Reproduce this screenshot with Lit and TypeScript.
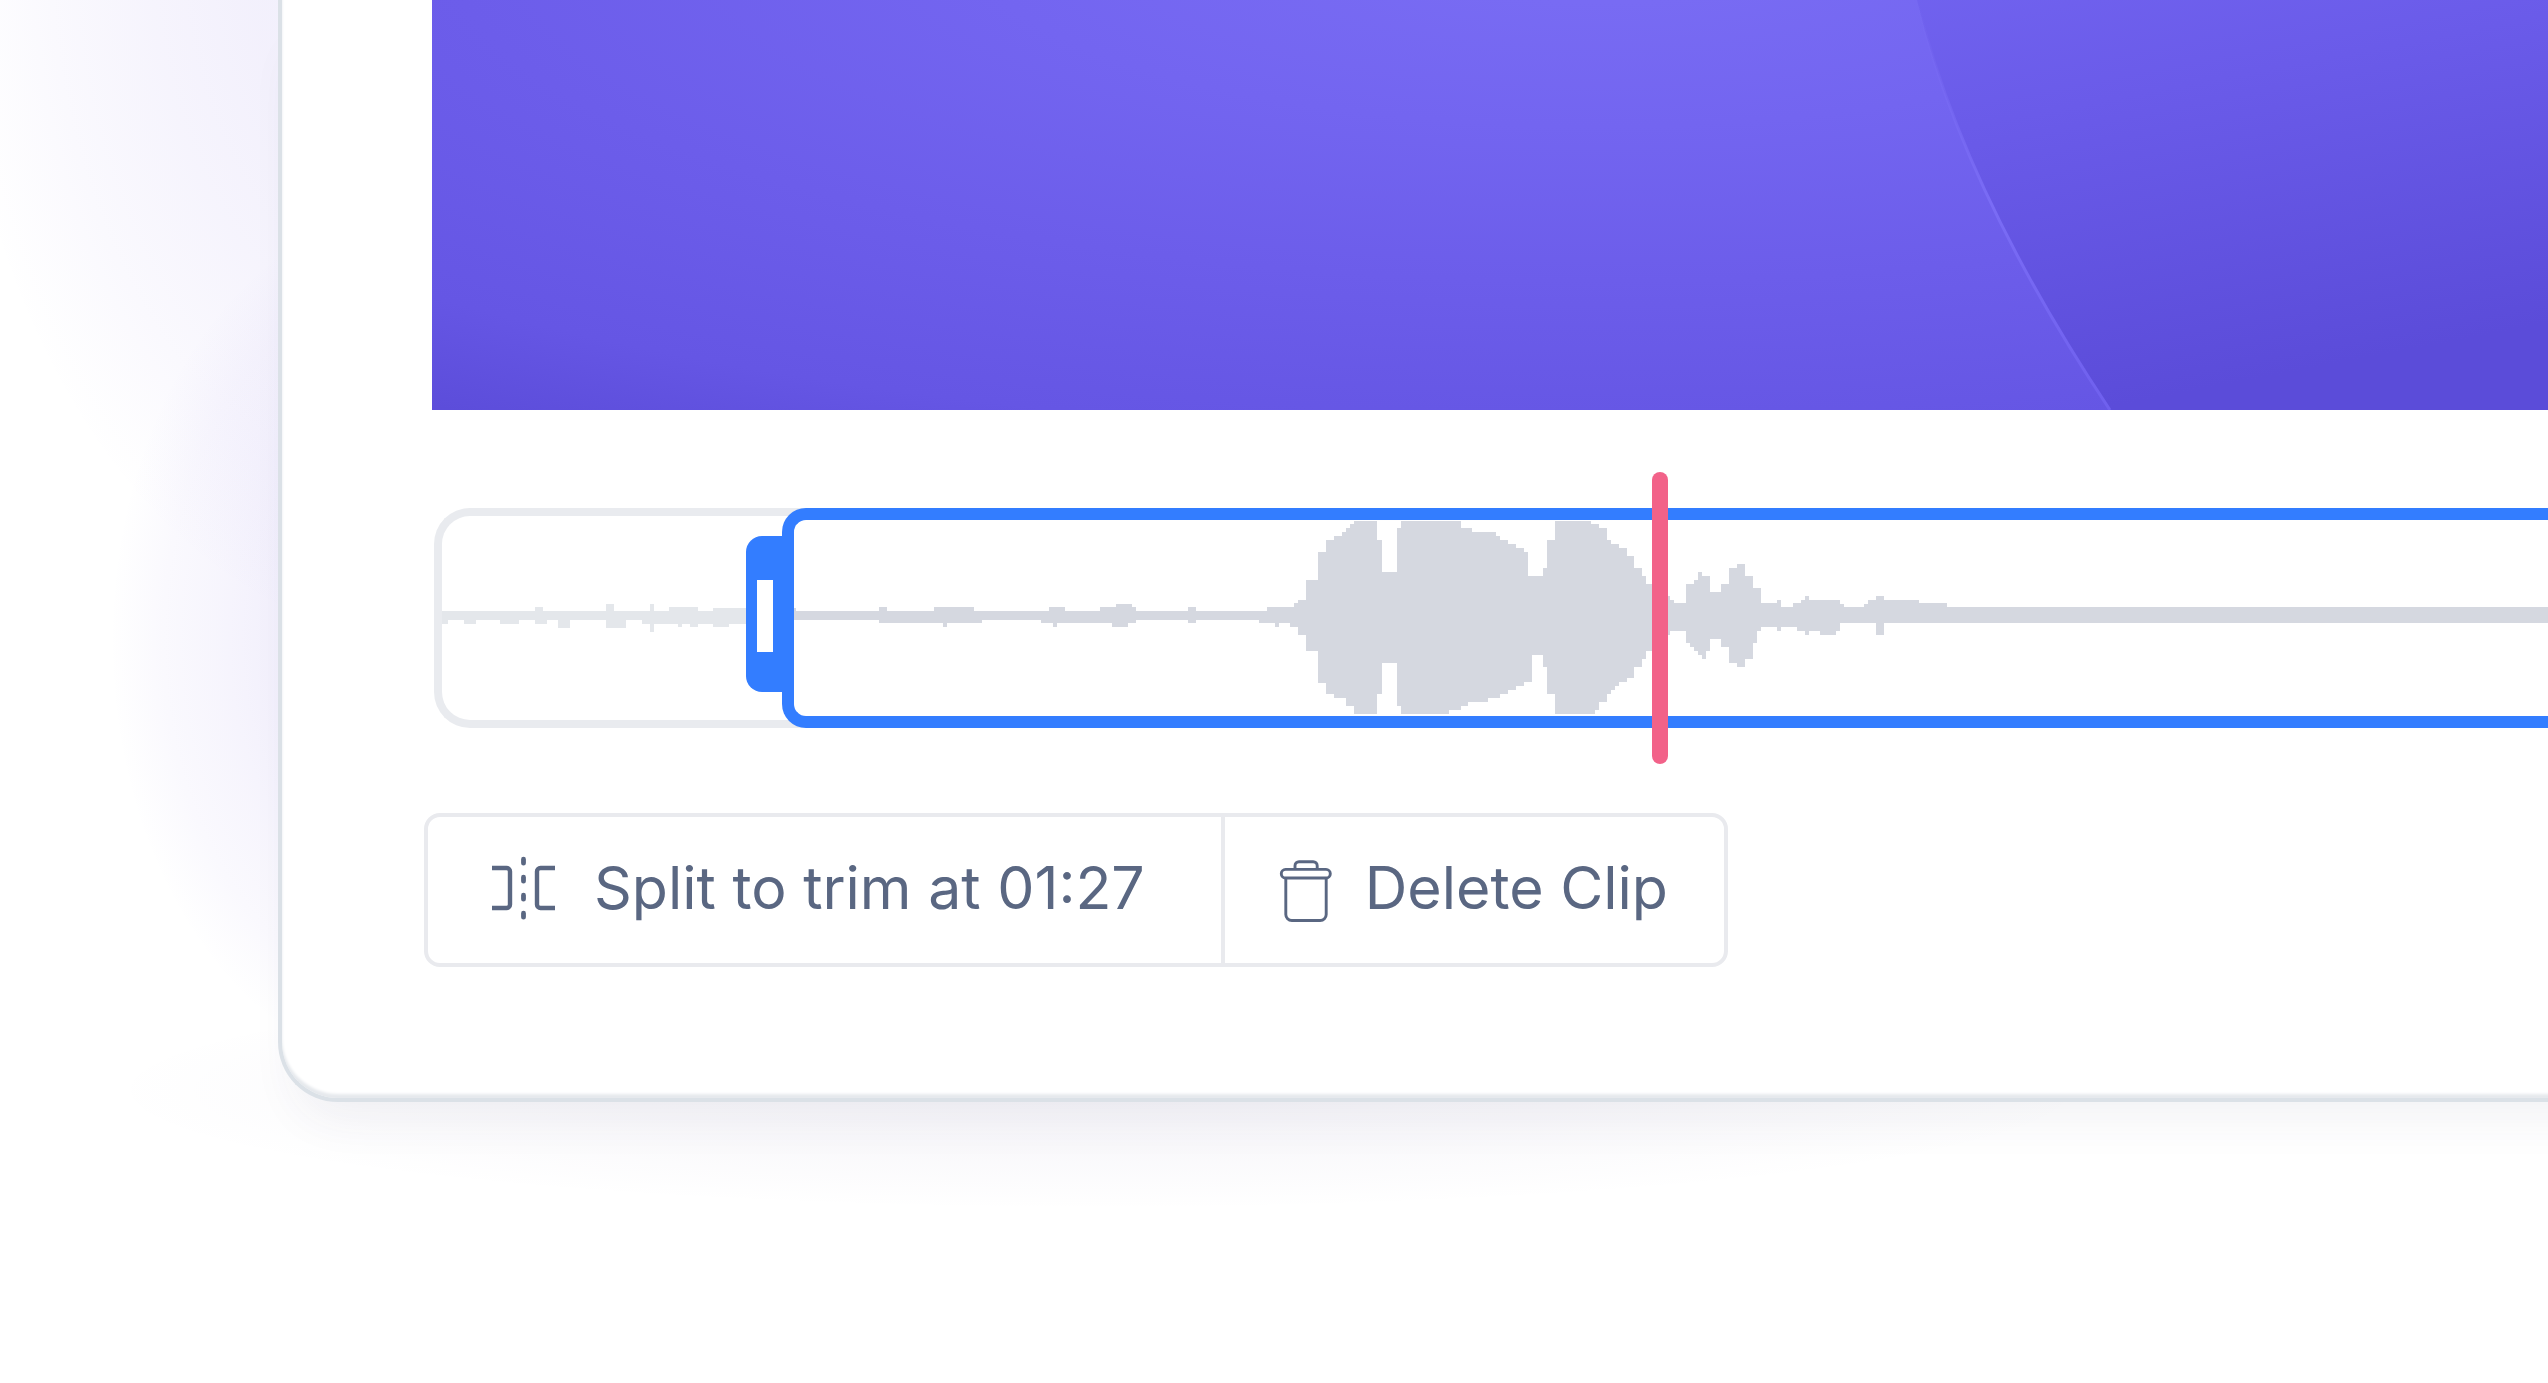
import { LitElement, html, svg, css } from "lit";
import { customElement, property } from "lit/decorators.js";

/** One step of the waveform: left edge, top and bottom, in canvas units. */
type Step = [x: number, top: number, bottom: number];

const IDLE_STEPS: Step[] = [
  [442, 611, 624], [448, 611, 620], [464, 611, 624], [476, 611, 620], [500, 611, 624],
  [519, 611, 620], [535, 607, 624], [543, 611, 624], [547, 611, 620], [558, 611, 628],
  [570, 611, 620], [606, 604, 628], [614, 611, 628], [626, 611, 620], [642, 611, 624],
  [650, 604, 632], [654, 611, 624], [669, 607, 624], [678, 607, 627], [682, 607, 624],
  [690, 607, 627], [698, 611, 624], [713, 608, 627], [729, 608, 624], [760, 608, 624],
];

const CLIP_STEPS: Step[] = [
  [794, 608, 620], [796, 611, 620], [879, 607, 623], [887, 611, 623], [934, 607, 623],
  [943, 607, 627], [947, 607, 623], [974, 611, 623], [982, 611, 620], [1041, 611, 623],
  [1049, 607, 623], [1053, 607, 627], [1057, 607, 623], [1065, 611, 623], [1100, 607, 623],
  [1112, 607, 627], [1116, 604, 627], [1128, 604, 623], [1132, 607, 623], [1136, 611, 620],
  [1188, 607, 623], [1196, 611, 620], [1259, 611, 623], [1267, 607, 623], [1275, 607, 627],
  [1279, 607, 623], [1290, 607, 627], [1294, 603, 627], [1298, 600, 635], [1306, 580, 651],
  [1318, 552, 683], [1326, 540, 694], [1334, 536, 698], [1342, 532, 698], [1346, 528, 706],
  [1350, 524, 706], [1354, 521, 714], [1377, 540, 694], [1382, 572, 663], [1397, 528, 706],
  [1401, 521, 714], [1449, 521, 710], [1461, 528, 706], [1468, 528, 702], [1472, 532, 702],
  [1488, 532, 698], [1496, 536, 698], [1500, 540, 694], [1508, 544, 690], [1516, 548, 686],
  [1524, 552, 682], [1528, 576, 682], [1532, 576, 655], [1543, 568, 667], [1547, 540, 694],
  [1555, 521, 714], [1591, 524, 714], [1595, 524, 710], [1599, 528, 702], [1607, 540, 694],
  [1611, 544, 690], [1615, 544, 686], [1619, 548, 682], [1627, 556, 678], [1634, 568, 667],
  [1642, 576, 659], [1646, 584, 651], [1668, 596, 635], [1670, 600, 631], [1674, 603, 631],
  [1686, 584, 643], [1690, 584, 647], [1694, 580, 651], [1698, 572, 655], [1702, 576, 659],
  [1706, 576, 651], [1710, 592, 639], [1721, 584, 647], [1729, 568, 663], [1737, 564, 667],
  [1745, 576, 659], [1753, 588, 643], [1757, 588, 631], [1761, 603, 627], [1777, 600, 631],
  [1781, 607, 627], [1793, 603, 627], [1797, 603, 631], [1801, 600, 631], [1805, 596, 635],
  [1809, 600, 631], [1820, 600, 635], [1836, 600, 631], [1840, 604, 623], [1844, 607, 623],
  [1864, 604, 623], [1868, 600, 623], [1876, 596, 635], [1884, 600, 623], [1919, 603, 623],
  [1947, 607, 623], [6000, 607, 623],
];

@customElement("wave-form")
export class WaveForm extends LitElement {
  @property({ attribute: false }) steps: Step[] = [];
  @property({ type: Number }) top = 0;

  static styles = css`
    :host { display: block; overflow: hidden; }
    .wave { display: block; width: 100%; height: 100%; fill: currentColor; }
  `;

  render() {
    if (!this.steps.length) return html``;
    const x0 = this.steps[0][0];
    let upper = "";
    let lower = "";
    this.steps.forEach(([x, top, bottom], i) => {
      const px = x - x0;
      upper += i ? `H${px}V${top - this.top}` : `M${px} ${top - this.top}`;
      const next = this.steps[i + 1];
      const right = next ? next[0] - x0 : px;
      lower = `L${right} ${bottom - this.top}H${px}` + lower;
    });
    return html`<svg class="wave" shape-rendering="crispEdges" aria-hidden="true">
      ${svg`<path d=${upper + lower + "Z"} />`}
    </svg>`;
  }
}

@customElement("app-root")
export class AppRoot extends LitElement {
  static styles = css`
    :host {
      display: block;
      min-height: 100vh;
      box-sizing: border-box;
      padding-left: 278px;
      overflow: hidden;
      font-family: Inter, "Liberation Sans", sans-serif;
      color: #5a6782;
      background:
        radial-gradient(ellipse 480px 710px at 430px -60px,
          rgba(100, 70, 220, 0.085) 0%, rgba(100, 70, 220, 0.08) 38%,
          rgba(100, 70, 220, 0.06) 58%, rgba(100, 70, 220, 0.03) 80%,
          rgba(100, 70, 220, 0) 100%),
        radial-gradient(ellipse 320px 440px at 430px 640px,
          rgba(100, 70, 220, 0.1) 0%, rgba(100, 70, 220, 0.08) 50%,
          rgba(100, 70, 220, 0.05) 68%, rgba(100, 70, 220, 0.03) 84%,
          rgba(100, 70, 220, 0) 100%),
        radial-gradient(ellipse 1000px 120px at 1100px 1090px,
          rgba(70, 50, 130, 0.05) 0%, rgba(70, 50, 130, 0.03) 50%,
          rgba(70, 50, 130, 0) 100%),
        #fff;
    }
    .card {
      margin-right: -100px;
      padding: 0 100px 131px 142px;
      border: solid #dbe1e7;
      border-width: 0 0 4px 4px;
      border-bottom-left-radius: 60px;
      background: #fff;
      box-shadow: inset 0 -4px 3px #e6e9ed, 0 34px 50px -20px rgba(60, 60, 100, 0.07);
    }
    .preview { display: block; margin-left: 8px; }
    .picture { display: block; width: 100%; height: auto; }

    .timeline {
      position: relative;
      display: flex;
      height: 220px;
      margin: 98px 0 85px 10px;
    }
    .idle {
      box-sizing: border-box;
      flex: none;
      width: 372px;
      border: 8px solid #e9ebef;
      border-right: 0;
      border-radius: 36px 0 0 36px;
      color: #e4e7eb;
    }
    .clip {
      position: relative;
      box-sizing: border-box;
      flex: 1;
      min-width: 0;
      margin-left: -24px;
      border: 12px solid #337dff;
      border-right: 0;
      border-radius: 24px 0 0 24px;
      background: #fff;
      color: #d5d8e0;
    }
    .idle wave-form, .clip wave-form { width: 100%; height: 100%; }
    .handle {
      position: absolute;
      left: 312px;
      top: 28px;
      display: grid;
      place-items: center start;
      box-sizing: border-box;
      width: 40px;
      height: 156px;
      padding: 4px 0 0 11px;
      border: 0;
      border-radius: 16px 0 0 16px;
      background: #337dff;
      cursor: ew-resize;
    }
    .grip { width: 16px; height: 72px; background: #fff; }
    .playhead {
      position: absolute;
      left: 1218px;
      top: -36px;
      bottom: -36px;
      width: 16px;
      border-radius: 8px;
      background: #f26289;
    }

    .actions {
      display: inline-flex;
      vertical-align: top;
      border: 4px solid #e9eaee;
      border-radius: 16px;
    }
    .action {
      display: flex;
      align-items: center;
      height: 146px;
      padding: 0 56px 0 52px;
      border: 0;
      background: none;
      color: inherit;
      font: 400 59px/72px Inter, "Liberation Sans", sans-serif;
      white-space: nowrap;
      cursor: pointer;
    }
    .action + .action { border-left: 4px solid #e9eaee; }
    .action.split { padding: 0 76px 0 62px; }
    .label { padding-bottom: 4px; }
    .icon {
      display: block;
      flex: none;
      width: 68px;
      height: 68px;
      margin-right: 36px;
      fill: none;
      stroke: currentColor;
    }
    .delete .icon { width: 56px; margin-right: 32px; }
  `;

  private picture() {
    return html`<svg class="picture" viewBox="0 0 2116 410" aria-hidden="true">
      <defs>
        <radialGradient id="glow" gradientUnits="userSpaceOnUse" cx="0" cy="0" r="1"
          gradientTransform="translate(1168 -60) scale(2100 620)">
          <stop offset="0.1" stop-color="#786bf3" />
          <stop offset="0.3" stop-color="#7365f0" />
          <stop offset="0.55" stop-color="#6c5dea" />
          <stop offset="0.8" stop-color="#6556e4" />
          <stop offset="0.95" stop-color="#5b4cd9" />
        </radialGradient>
        <linearGradient id="shade" gradientUnits="userSpaceOnUse" x1="1485" y1="-70" x2="1580" y2="426">
          <stop offset="0" stop-color="#7365f1" />
          <stop offset="0.4" stop-color="#6a5be9" />
          <stop offset="1" stop-color="#5b4cd9" />
        </linearGradient>
        <linearGradient id="rim" x1="0" y1="0" x2="0" y2="1">
          <stop offset="0" stop-color="#7b6df5" stop-opacity="0" />
          <stop offset="0.5" stop-color="#7a6cf5" />
          <stop offset="1" stop-color="#6f60ee" />
        </linearGradient>
      </defs>
      <rect width="2116" height="410" fill="url(#glow)" />
      <path d="M1485 0Q1530 188 1678 410H2116V0Z" fill="url(#shade)" />
      <path d="M1485 0Q1530 188 1678 410" fill="none" stroke="url(#rim)" stroke-width="3" />
    </svg>`;
  }

  render() {
    return html`
      <main class="card">
        <div class="preview">${this.picture()}</div>

        <section class="timeline">
          <div class="idle"><wave-form .steps=${IDLE_STEPS} .top=${516}></wave-form></div>
          <div class="clip"><wave-form .steps=${CLIP_STEPS} .top=${520}></wave-form></div>
          <button class="handle" type="button" aria-label="Clip start"><span class="grip"></span></button>
          <div class="playhead"></div>
        </section>

        <div class="actions">
          <button class="action split" type="button">
            <svg class="icon" viewBox="0 0 68 68" aria-hidden="true">
              <path d="M2 12H16.500a3.500 3.500 0 0 1 3.500 3.500V48.500a3.500 3.500 0 0 1-3.500 3.500H2" stroke-width="4.400" />
              <path d="M65 12H50.500a3.500 3.500 0 0 0-3.500 3.500V48.500a3.500 3.500 0 0 0 3.500 3.500H65" stroke-width="4.400" />
              <path d="M33.500 3.200v4M33.500 21.200v4M33.500 39.200v4M33.500 57.200v4" stroke-width="4.800" stroke-linecap="round" />
            </svg>
            <span class="label">Split to trim at 01:27</span>
          </button>
          <button class="action delete" type="button">
            <svg class="icon" viewBox="0 0 56 68" aria-hidden="true">
              <path d="M18 13V9.700a4 4 0 0 1 4-4H36.200a4 4 0 0 1 4 4V13" stroke-width="2.900" />
              <rect x="4.300" y="13.400" width="49" height="8.600" rx="4.300" stroke-width="2.900" />
              <path d="M8.800 22V58.500a6 6 0 0 0 6 6H43.200a6 6 0 0 0 6-6V22" stroke-width="2.900" />
            </svg>
            <span class="label">Delete Clip</span>
          </button>
        </div>
      </main>
    `;
  }
}
